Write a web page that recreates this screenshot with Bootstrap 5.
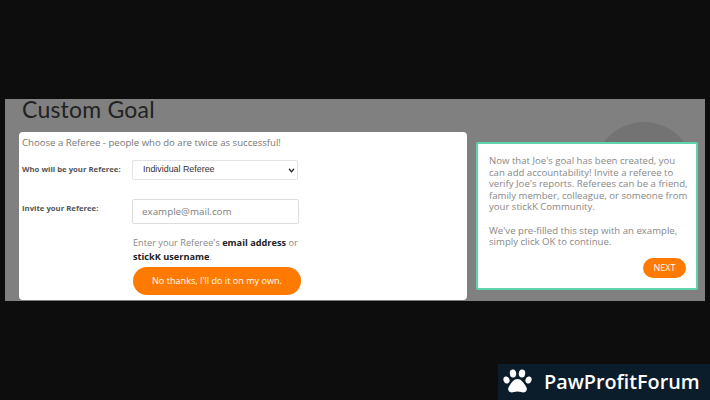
<!DOCTYPE html>
<html lang="en"><head><meta charset="utf-8"><title>Custom Goal</title>
<link href="https://cdn.jsdelivr.net/npm/bootstrap@5.3.0/dist/css/bootstrap.min.css" rel="stylesheet">
<style>
html,body{height:400px;overflow:hidden}
body{background:#0d0d0d;font-family:"Open Sans",sans-serif;position:relative}
.pf-top{height:99px}
.pf-stage{margin:0 5px;width:700px;height:202px;background:#808080;position:relative}
.pf-circle{position:absolute;left:589px;top:23px;width:100px;height:100px;border-radius:50%;background:#737373}
.pf-left{width:448px;margin-left:14px;position:relative}
.pf-title{font-family:"Lato",sans-serif;font-weight:400;font-size:23px;line-height:20px;height:33px;margin:0 0 0 3px;color:#222;letter-spacing:.2px}
.pf-form{background:#fff;border-radius:4px;height:168px;padding:3px 3px 0;color:#777;font-size:9.6px}
.pf-lead{line-height:16px;height:20px;color:#777}
.pf-row{display:flex}
.pf-gap1{margin-top:5px}
.pf-gap2{margin-top:19px}
.pf-lab{width:110px;font-size:7.75px;font-weight:700;color:#555;white-space:nowrap}
.pf-sel{width:166px;height:20px;font-family:"Liberation Sans",sans-serif;font-size:8.9px;padding:0 24px 0 10px;color:#333;border:1px solid #e3e3e3;border-radius:2px;background-image:url("data:image/svg+xml,%3csvg xmlns='http://www.w3.org/2000/svg' viewBox='0 0 16 16'%3e%3cpath fill='none' stroke='%23222' stroke-linecap='round' stroke-linejoin='round' stroke-width='3' d='m3 5 5 6 5-6'/%3e%3c/svg%3e");background-position:right 2px center;background-size:7px 7px;box-shadow:none}
.pf-inp{width:167px;height:25px;font-size:9.8px;padding:0 9px;border:1px solid #ddd;border-radius:2px;color:#777}
.pf-inp::placeholder{color:#808080;opacity:1}
.pf-help{margin-left:111px;line-height:14px;font-size:9.2px;color:#888;width:180px;margin-top:12px}
.pf-help b{color:#222;font-weight:700}
.pf-go{display:block;margin:3px 0 0 111px;width:168px;height:28px;border-radius:14px;background:#ff7a00;border:0;color:#fff;font-size:9.1px;padding:0}
.pf-tip{position:absolute;left:471px;top:43px;width:222px;height:148px;background:#fff;border:2px solid #5fd3ac;border-radius:2px;padding:11px 6px 0 11px;font-size:9.6px;line-height:11.6px;color:#888}
.pf-tip p{margin:0 0 11.600px}
.pf-next{position:absolute;right:10px;bottom:10px;width:43px;height:20px;border-radius:10px;background:#ff7a00;border:0;color:#fff;font-size:9px;padding:0}
.pf-brand{position:absolute;left:498px;top:364px;width:212px;height:36px;background:#0b1c2b;color:#fff;font-family:"Open Sans",sans-serif;font-weight:600;font-size:19.800px;padding-left:46px;line-height:36px}
.pf-paw{position:absolute;left:5px;top:3px;width:29px;height:29px}
</style></head>
<body>
<div class="pf-top"></div>
<div class="pf-stage">
  <div class="pf-circle"></div>
  <div class="pf-left">
    <h1 class="pf-title">Custom Goal</h1>
    <div class="pf-form">
      <div class="pf-lead">Choose a Referee - people who do are twice as successful!</div>
      <div class="pf-row align-items-center pf-gap1">
        <label class="pf-lab" for="r1">Who will be your Referee:</label>
        <select class="form-select pf-sel" id="r1"><option>Individual Referee</option></select>
      </div>
      <div class="pf-row pf-gap2">
        <label class="pf-lab pt-1" for="r2">Invite your Referee:</label>
        <input class="form-control pf-inp" id="r2" placeholder="example@mail.com">
      </div>
      <div class="pf-help">Enter your Referee's <b>email address</b> or <b>stickK username</b>.</div>
      <button class="btn pf-go">No thanks, I'll do it on my own.</button>
    </div>
  </div>
  <div class="pf-tip">
    <p>Now that Joe's goal has been created, you can add accountability! Invite a referee to verify Joe's reports. Referees can be a friend, family member, colleague, or someone from your stickK Community.</p>
    <p>We've pre-filled this step with an example, simply click OK to continue.</p>
    <button class="btn pf-next">NEXT</button>
  </div>
</div>
<div class="pf-brand">
  <svg class="pf-paw" viewBox="0 0 29 29" fill="#fff"><ellipse cx="3.5" cy="13" rx="3" ry="3.6" transform="rotate(-20 3.5 13)"/><ellipse cx="10" cy="6.500" rx="3.2" ry="4" transform="rotate(-8 10 6.5)"/><ellipse cx="19" cy="6.500" rx="3.2" ry="4" transform="rotate(8 19 6.5)"/><ellipse cx="25.5" cy="13" rx="3" ry="3.6" transform="rotate(20 25.5 13)"/><path d="M14.5 12c3.4 0 5.500 3 7.600 6 1.600 2.300 2.300 4 1.300 5.800-1 1.700-3.200 1.900-5.200 1.300-1.300-.4-2.500-.7-3.700-.7s-2.400.3-3.700.7c-2 .6-4.200.4-5.200-1.300-1-1.800-.3-3.500 1.300-5.800 2.100-3 4.200-6 7.600-6z"/></svg>
  PawProfitForum
</div>
</body></html>
